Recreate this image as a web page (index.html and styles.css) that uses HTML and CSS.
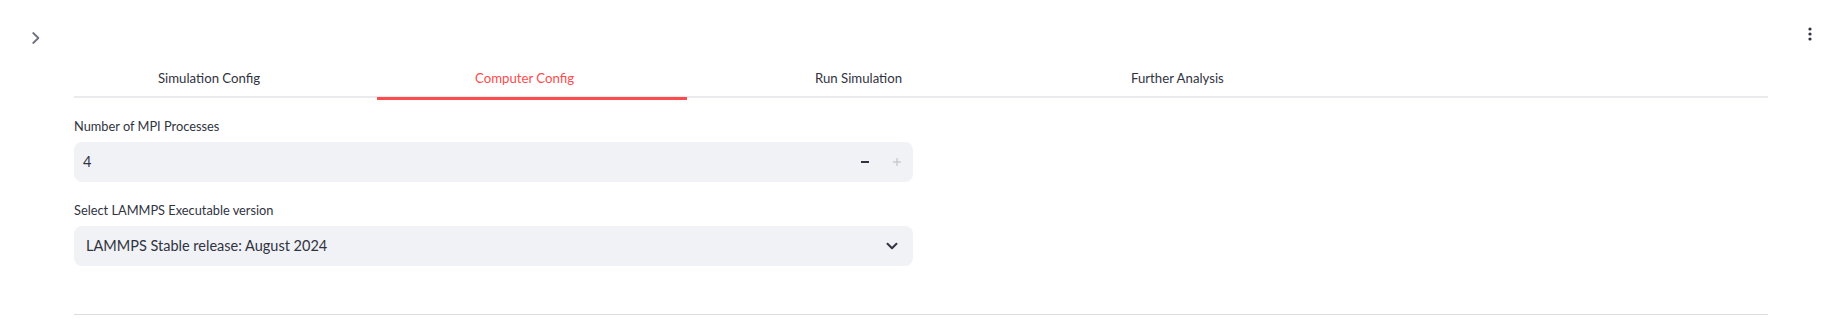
FILE: index.html
```html
<!DOCTYPE html>
<html lang="en">
<head>
<meta charset="utf-8">
<title>Computer Config</title>
<link rel="stylesheet" href="styles.css">
</head>
<body>
<header class="header">
  <button class="icon-btn sidebar-toggle" aria-label="Open sidebar">
    <svg width="16" height="16" viewBox="0 0 16 16"><path d="M5.2 3 L10.4 8 L5.2 13" fill="none" stroke="#6f7280" stroke-width="1.8" stroke-linecap="round" stroke-linejoin="round"/></svg>
  </button>
  <button class="icon-btn menu" aria-label="Main menu">
    <svg width="16" height="16" viewBox="0 0 16 16"><circle cx="8" cy="3" r="1.6" fill="#31333F"/><circle cx="8" cy="8" r="1.6" fill="#31333F"/><circle cx="8" cy="13" r="1.6" fill="#31333F"/></svg>
  </button>
</header>
<main class="main">
  <div class="tabs" role="tablist">
    <button class="tab tab-1" role="tab">Simulation Config</button>
    <button class="tab tab-2 active" role="tab">Computer Config</button>
    <button class="tab tab-3" role="tab">Run Simulation</button>
    <button class="tab tab-4" role="tab">Further Analysis</button>
  </div>
  <section class="panel">
    <div class="cols">
      <div class="col">
        <div class="field">
          <label class="label">Number of MPI Processes</label>
          <div class="control number">
            <span class="value">4</span>
            <div class="steppers">
              <button class="step" aria-label="Decrement">
                <svg width="12" height="12" viewBox="0 0 12 12"><path d="M2 6 H10" stroke="#31333F" stroke-width="2"/></svg>
              </button>
              <button class="step" aria-label="Increment">
                <svg width="12" height="12" viewBox="0 0 12 12"><path d="M2 6 H10 M6 2 V10" stroke="#c9cbd1" stroke-width="1.4"/></svg>
              </button>
            </div>
          </div>
        </div>
        <div class="field">
          <label class="label">Select LAMMPS Executable version</label>
          <div class="control select">
            <span class="value select-value">LAMMPS Stable release: August 2024</span>
            <svg class="caret" width="12" height="12" viewBox="0 0 12 12"><path d="M1.5 3.8 L6 8.2 L10.5 3.8" fill="none" stroke="#31333F" stroke-width="2" stroke-linecap="round" stroke-linejoin="round"/></svg>
          </div>
        </div>
      </div>
      <div class="col"></div>
    </div>
    <hr class="divider">
  </section>
</main>
</body>
</html>
```

FILE: styles.css
```css
* { box-sizing: border-box; }
html, body { margin: 0; padding: 0; background: #ffffff; }
body {
  font-family: "Lato", "Noto Sans", sans-serif;
  color: #31333F;
  width: 1836px;
  height: 322px;
  overflow: hidden;
}
button { font: inherit; color: inherit; background: none; border: 0; padding: 0; cursor: pointer; }

.header {
  display: flex;
  justify-content: space-between;
  align-items: flex-start;
  height: 58px;
}
.icon-btn { display: block; width: 16px; height: 16px; }
.icon-btn svg { display: block; }
.sidebar-toggle { margin: 30px 0 0 28px; }
.menu { margin: 26px 18px 0 0; }

.main { padding: 0 68px 0 74px; }

.tabs {
  display: grid;
  grid-template-columns: 303px 310px 310px 310px;
  height: 40px;
  border-bottom: 2px solid #ebebed;
}
.tab {
  position: relative;
  height: 40px;
  font-size: 13.2px;
  line-height: 36px;
  text-align: left;
  color: #31333F;
  white-space: nowrap;
}
.tab-1 { padding-left: 84px; }
.tab-2 { padding-left: 98px; }
.tab-3 { padding-left: 128px; }
.tab-4 { padding-left: 134px; }
.tab.active { color: #ff4b4b; }
.tab.active::after {
  content: "";
  position: absolute;
  left: 0; right: 0; bottom: -2px;
  height: 3px;
  background: #ff4b4b;
}

.panel { padding-top: 18px; }
.cols {
  display: grid;
  grid-template-columns: 1fr 1fr;
  gap: 16px;
}
.field + .field { margin-top: 18px; }
.label {
  display: block;
  font-size: 12.8px;
  line-height: 20px;
  margin-bottom: 6px;
}
.control {
  display: flex;
  align-items: center;
  height: 40px;
  background: #f0f2f6;
  border-radius: 8px;
}
.value { font-size: 14.5px; line-height: 20px; }
.number .value { padding-left: 9px; flex: 1; }
.steppers { display: flex; height: 100%; }
.step {
  width: 32px;
  height: 40px;
  display: flex;
  align-items: center;
  justify-content: center;
}
.step svg { display: block; }
.select { padding: 0 15px 0 12px; justify-content: space-between; }
.caret { display: block; }

.divider {
  margin: 48px 0 0 0;
  border: 0;
  border-top: 1px solid #dcdcde;
  height: 0;
}
```
